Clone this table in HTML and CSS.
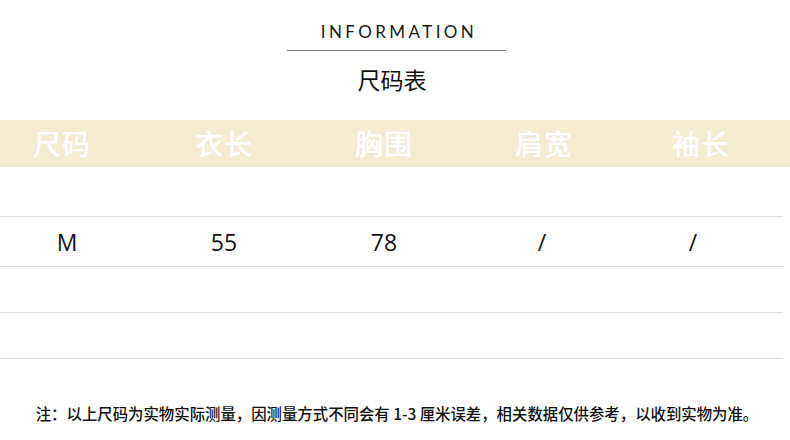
FILE: index.html
```html
<!DOCTYPE html>
<html lang="zh">
<head>
<meta charset="utf-8">
<link rel="stylesheet" href="styles.css">
</head>
<body>
<div class="page">
  <div class="title">INFORMATION</div>
  <div class="rule"></div>
  <div class="subtitle">尺码表</div>
  <div class="band">
    <div class="grid">
      <div class="h-first">尺码</div><div>衣长</div><div>胸围</div><div>肩宽</div><div class="h-last">袖长</div>
    </div>
  </div>
  <div class="rows">
    <div class="row row-data">
      <div class="grid data">
        <div class="d-first">M</div><div>55</div><div>78</div><div class="d-fourth">/</div><div class="d-last">/</div>
      </div>
    </div>
    <div class="row row-empty"></div>
    <div class="row row-empty"></div>
  </div>
  <div class="note">注：以上尺码为实物实际测量，因测量方式不同会有 1-3 厘米误差，相关数据仅供参考，以收到实物为准。</div>
</div>
</body>
</html>
```
FILE: styles.css
```css
html, body {
  margin: 0;
  padding: 0;
  background: #ffffff;
}
.page {
  width: 790px;
  height: 440px;
  overflow: hidden;
  font-family: "Noto Sans CJK SC", "Noto Sans", sans-serif;
  color: #111;
}
.title {
  padding-top: 22px;
  text-align: center;
  font-family: "Lato", "DejaVu Sans", sans-serif;
  font-size: 17px;
  line-height: 20px;
  letter-spacing: 3.4px;
  padding-left: 8px;
  color: #1a1a1a;
}
.rule {
  width: 219px;
  height: 1px;
  background: #7a7a7a;
  margin: 8px 0 0 287px;
}
.subtitle {
  margin-top: 12px;
  text-align: center;
  font-size: 23px;
  line-height: 32px;
  color: #111;
  padding-right: 6px;
}
.band {
  margin-top: 25px;
  height: 47px;
  background: #f5ebd1;
  display: flex;
  align-items: center;
  overflow: hidden;
}
.grid {
  display: grid;
  grid-template-columns: repeat(5, 160px);
  margin-left: -16px;
  justify-items: center;
  align-items: center;
}
.band .grid {
  color: #ffffff;
  font-size: 28px;
  font-weight: 500;
  line-height: 47px;
  letter-spacing: 1px;
}
.h-first {
  padding-right: 4px;
}
.h-last {
  padding-right: 6px;
}
.rows {
  margin-top: 49px;
  width: 783px;
}
.row {
  border-top: 1px solid #dcdcdc;
  display: flex;
  align-items: center;
}
.row-data {
  height: 49px;
}
.row-empty {
  height: 45px;
}
.row-empty:last-child {
  border-bottom: 1px solid #dcdcdc;
}
.data {
  font-family: "Open Sans", "Noto Sans", sans-serif;
  font-size: 23px;
  font-weight: 500;
  line-height: 30px;
  color: #111;
}
.d-first {
  padding-left: 6px;
}
.d-fourth {
  padding-right: 4px;
}
.d-last {
  padding-right: 22px;
}
.note {
  margin-top: 44px;
  text-align: center;
  font-size: 15.4px;
  font-weight: 500;
  line-height: 20px;
  color: #111;
  padding-left: 4px;
}
```
